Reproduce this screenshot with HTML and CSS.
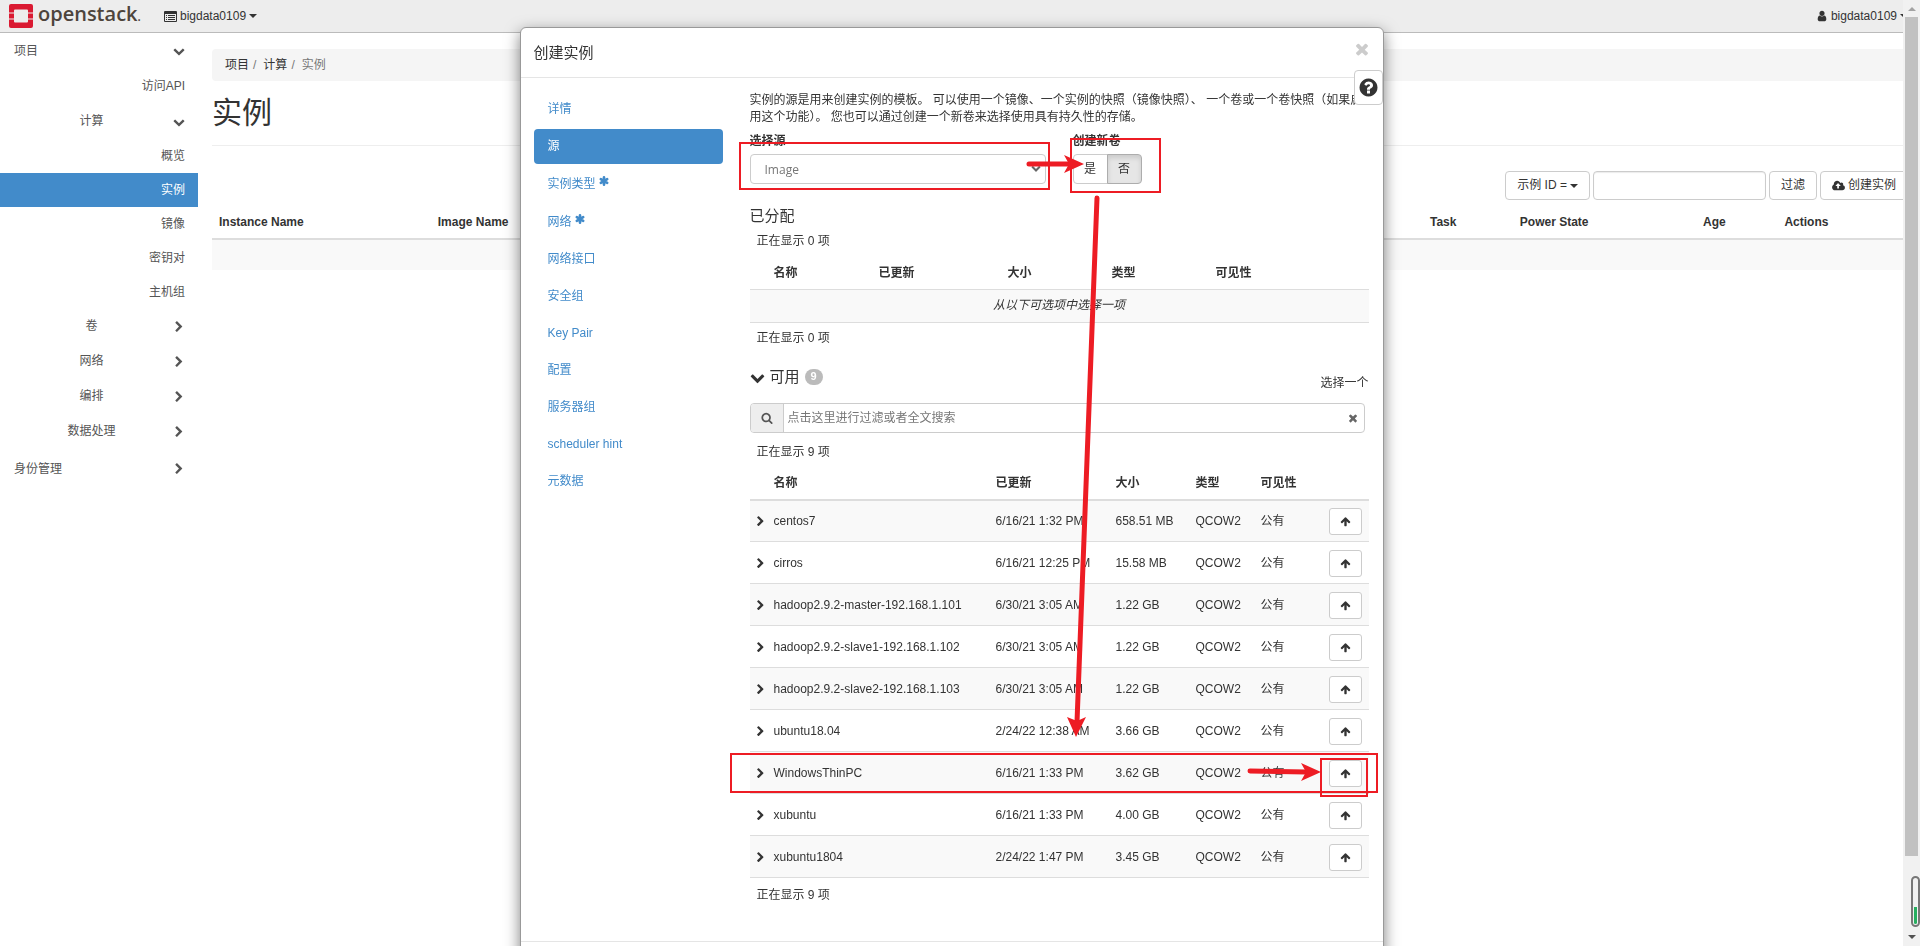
FILE: index.html
```html
<!DOCTYPE html>
<html lang="zh-CN">
<head>
<meta charset="utf-8">
<title>实例 - OpenStack Dashboard</title>
<link rel="stylesheet" href="styles.css">
</head>
<body>
<svg class="sprite" aria-hidden="true">
  <symbol id="down" viewBox="0 0 1792 1792"><path d="M1683 808l-742 741q-19 19-45 19t-45-19l-742-741q-19-19-19-45.500t19-45.500l166-165q19-19 45-19t45 19l531 531 531-531q19-19 45-19t45 19l166 165q19 19 19 45.500t-19 45.500z"/></symbol>
  <symbol id="right" viewBox="0 0 1792 1792"><path d="M1363 877l-742 742q-19 19-45 19t-45-19l-166-166q-19-19-19-45t19-45l531-531-531-531q-19-19-19-45t19-45l166-166q19-19 45-19t45 19l742 742q19 19 19 45t-19 45z"/></symbol>
  <symbol id="up" viewBox="0 0 1792 1792"><path d="M1675 971q0 51-37 90l-75 75q-38 38-91 38-54 0-90-38l-294-293v704q0 52-37.500 84.500t-90.500 32.500h-128q-53 0-90.500-32.500t-37.500-84.500v-704l-294 293q-36 38-90 38t-90-38l-75-75q-38-38-38-90 0-53 38-91l651-651q35-37 90-37 54 0 91 37l651 651q37 39 37 91z"/></symbol>
  <symbol id="times" viewBox="0 0 1792 1792"><path d="M1490 1322q0 40-28 68l-136 136q-28 28-68 28t-68-28l-294-294-294 294q-28 28-68 28t-68-28l-136-136q-28-28-28-68t28-68l294-294-294-294q-28-28-28-68t28-68l136-136q28-28 68-28t68 28l294 294 294-294q28-28 68-28t68 28l136 136q28 28 28 68t-28 68l-294 294 294 294q28 28 28 68z"/></symbol>
  <symbol id="question" viewBox="0 0 1792 1792"><path d="M1024 1376v-192q0-14-9-23t-23-9h-192q-14 0-23 9t-9 23v192q0 14 9 23t23 9h192q14 0 23-9t9-23zm256-672q0-88-55.500-163t-138.500-116-170-41q-243 0-371 213-15 24 8 42l132 100q7 6 19 6 16 0 25-12 53-68 86-92 34-24 86-24 48 0 85.500 26t37.500 59q0 38-20 61t-68 45q-63 28-115.500 86.500t-52.500 125.500v36q0 14 9 23t23 9h192q14 0 23-9t9-23q0-19 21.500-49.500t54.500-49.500q32-18 49-28.500t46-35 44.500-48 28-60.500 12.500-81zm384 192q0 209-103 385.500t-279.500 279.500-385.500 103-385.500-103-279.500-279.500-103-385.500 103-385.500 279.500-279.500 385.500-103 385.500 103 279.500 279.500 103 385.500z"/></symbol>
  <symbol id="search" viewBox="0 0 1792 1792"><path d="M1216 832q0-185-131.500-316.500t-316.500-131.500-316.500 131.500-131.500 316.500 131.500 316.500 316.500 131.500 316.500-131.500 131.500-316.500zm512 832q0 52-38 90t-90 38q-54 0-90-38l-343-342q-179 124-399 124-143 0-273.500-55.500t-225-150-150-225-55.500-273.500 55.500-273.500 150-225 225-150 273.500-55.500 273.500 55.500 225 150 150 225 55.500 273.500q0 220-124 399l343 343q37 37 37 90z"/></symbol>
  <symbol id="user" viewBox="0 0 1792 1792"><path d="M1536 1399q0 109-62.500 187t-150.500 78h-854q-88 0-150.500-78t-62.500-187q0-85 8.500-160.500t31.500-152 58.500-131 94-89 134.500-34.500q131 128 313 128t313-128q76 0 134.500 34.500t94 89 58.500 131 31.500 152 8.500 160.500zm-256-887q0 159-112.500 271.500t-271.500 112.500-271.500-112.500-112.500-271.500 112.500-271.500 271.500-112.500 271.500 112.500 112.500 271.500z"/></symbol>
  <symbol id="cloud" viewBox="0 0 1920 1792"><path d="M1280 864q0-14-9-23l-352-352q-9-9-23-9t-23 9l-351 351q-10 12-10 24 0 14 9 23t23 9h224v352q0 13 9.500 22.500t22.500 9.500h192q13 0 22.500-9.500t9.500-22.500v-352h224q13 0 22.500-9.500t9.500-22.500zm640 288q0 159-112.500 271.500t-271.500 112.500h-1088q-185 0-316.500-131.500t-131.500-316.500q0-130 70-240t188-165q-2-30-2-43 0-212 150-362t362-150q156 0 285.500 87t188.500 231q71-62 166-62 106 0 181 75t75 181q0 76-41 138 130 31 213.500 135.500t83.500 238.500z"/></symbol>
  <symbol id="list" viewBox="0 0 13 11"><path fill-rule="evenodd" d="M1 0h11a1 1 0 0 1 1 1v9a1 1 0 0 1-1 1H1a1 1 0 0 1-1-1V1a1 1 0 0 1 1-1zM1 3v7h11V3zM2 4h1v1H2zM4 4h7v1H4zM2 6h1v1H2zM4 6h7v1H4zM2 8h1v1H2zM4 8h7v1H4z"/></symbol>
  <symbol id="star" viewBox="0 0 10 10"><path d="M5 1.300v7.400M1.800 3.100l6.400 3.800M8.200 3.100l-6.400 3.800" fill="none" stroke="currentColor" stroke-width="2.600" stroke-linecap="round"/></symbol>
</svg>

<div class="page">
  <header class="topbar">
    <a class="brand" href="#">
      <svg class="logo" viewBox="0 0 24 24" aria-hidden="true"><path fill="#da1a32" d="M2 0h20a2 2 0 0 1 2 2v6.500h-5V6.500a1 1 0 0 0-1-1H6a1 1 0 0 0-1 1v2H0V2a2 2 0 0 1 2-2zM0 9.500h5v5H0zM19 9.500h5v5h-5zM0 15.500h5v2a1 1 0 0 0 1 1h12a1 1 0 0 0 1-1v-2h5V22a2 2 0 0 1-2 2H2a2 2 0 0 1-2-2z"/></svg>
      <span class="wordmark">openstack<small>.</small></span>
    </a>
    <button class="menu" type="button"><svg class="i-list"><use href="#list"/></svg>bigdata0109<span class="caret"></span></button>
    <button class="menu account" type="button"><svg class="i12"><use href="#user"/></svg>bigdata0109<span class="caret"></span></button>
  </header>
  <div class="columns">
    <nav class="sidebar" aria-label="导航">
      <a class="top" href="#">项目<svg class="i12"><use href="#down"/></svg></a>
      <a class="leaf wide" href="#">访问API</a>
      <a class="group" href="#"><span>计算</span><svg class="i12"><use href="#down"/></svg></a>
      <a class="leaf" href="#">概览</a>
      <a class="leaf active" href="#">实例</a>
      <a class="leaf" href="#">镜像</a>
      <a class="leaf" href="#">密钥对</a>
      <a class="leaf" href="#">主机组</a>
      <a class="group" href="#"><span>卷</span><svg class="i12"><use href="#right"/></svg></a>
      <a class="group" href="#"><span>网络</span><svg class="i12"><use href="#right"/></svg></a>
      <a class="group" href="#"><span>编排</span><svg class="i12"><use href="#right"/></svg></a>
      <a class="group" href="#"><span>数据处理</span><svg class="i12"><use href="#right"/></svg></a>
      <a class="top" href="#">身份管理<svg class="i12"><use href="#right"/></svg></a>
    </nav>
    <main class="main">
      <div class="crumbs"><a href="#">项目</a><i>/</i><a href="#">计算</a><i>/</i><span>实例</span></div>
      <h1>实例</h1>
      <div class="toolbar">
        <button class="btn" type="button">示例 ID =<span class="caret"></span></button>
        <input class="filter" type="text" aria-label="过滤">
        <button class="btn" type="button">过滤</button>
        <button class="btn" type="button"><svg class="i-cloud"><use href="#cloud"/></svg>创建实例</button>
      </div>
      <table class="instances">
        <colgroup><col class="c-inst"><col class="c-img"><col class="c-task"><col class="c-power"><col class="c-age"><col></colgroup>
        <thead><tr><th>Instance Name</th><th>Image Name</th><th>Task</th><th>Power State</th><th>Age</th><th>Actions</th></tr></thead>
        <tbody><tr><td colspan="6"></td></tr></tbody>
      </table>
    </main>
  </div>
</div>

<div class="backdrop">
  <section class="modal" role="dialog" aria-labelledby="dlg">
    <header class="modal-head">
      <h2 id="dlg">创建实例</h2>
      <button class="close" type="button" aria-label="关闭"><svg><use href="#times"/></svg></button>
    </header>
    <button class="help" type="button" aria-label="帮助"><svg><use href="#question"/></svg></button>
    <div class="modal-body">
      <nav class="steps" aria-label="步骤">
        <a href="#">详情</a>
        <a class="active" href="#">源</a>
        <a class="required" href="#">实例类型<svg><use href="#star"/></svg></a>
        <a class="required" href="#">网络<svg><use href="#star"/></svg></a>
        <a href="#">网络接口</a>
        <a href="#">安全组</a>
        <a href="#">Key Pair</a>
        <a href="#">配置</a>
        <a href="#">服务器组</a>
        <a href="#">scheduler hint</a>
        <a href="#">元数据</a>
      </nav>
      <div class="content">
        <p class="intro">实例的源是用来创建实例的模板。 可以使用一个镜像、一个实例的快照（镜像快照）、 一个卷或一个卷快照（如果启用这个功能）。 您也可以通过创建一个新卷来选择使用具有持久性的存储。</p>
        <div class="source">
          <div class="field">
            <label for="src">选择源</label>
            <div class="select"><select id="src"><option>Image</option></select><svg><use href="#down"/></svg></div>
          </div>
          <div class="field">
            <span class="label" id="vol">创建新卷</span>
            <div class="toggle" role="group" aria-labelledby="vol"><button type="button">是</button><button class="on" type="button" aria-pressed="true">否</button></div>
          </div>
        </div>

        <h3>已分配</h3>
        <p class="count">正在显示 0 项</p>
        <table class="allocated">
          <colgroup><col class="w24"><col class="w105"><col class="w129"><col class="w104"><col class="w104"><col></colgroup>
          <thead><tr><th></th><th>名称</th><th>已更新</th><th>大小</th><th>类型</th><th>可见性</th></tr></thead>
          <tbody><tr><td colspan="6"><em>从以下可选项中选择一项</em></td></tr></tbody>
        </table>
        <p class="count">正在显示 0 项</p>

        <div class="avail-head">
          <h3><svg><use href="#down"/></svg>可用<span class="badge">9</span></h3>
          <span>选择一个</span>
        </div>
        <div class="search">
          <span class="addon"><svg class="i12"><use href="#search"/></svg></span>
          <input type="text" aria-label="搜索" placeholder="点击这里进行过滤或者全文搜索">
          <button type="button" aria-label="清除"><svg class="i12"><use href="#times"/></svg></button>
        </div>
        <p class="count">正在显示 9 项</p>
        <table class="available">
          <colgroup><col class="w24"><col class="w222"><col class="w120"><col class="w80"><col class="w65"><col></colgroup>
          <thead><tr><th></th><th>名称</th><th>已更新</th><th>大小</th><th>类型</th><th>可见性</th></tr></thead>
          <tbody id="images"></tbody>
        </table>
        <p class="count">正在显示 9 项</p>
      </div>
    </div>
    <footer class="modal-foot"></footer>
    <svg class="marks" viewBox="0 0 864 920" aria-hidden="true">
      <g fill="none" stroke="#ed1c24" stroke-width="2">
        <path d="M220 115h309v46H220zM551 111h89v53h-89zM211 726h646v38H211zM801 731h46v37h-46z"/>
        <g stroke-width="5" stroke-linecap="round"><path d="M509 136h40M577 170l-20 524M730 743l56 1"/></g>
      </g>
      <g fill="#ed1c24"><path d="M544 127l20 9-20 9 5-9zM547 689l10 4 9-4-10 20zM781 735l20 9-20 9 5-9z"/></g>
    </svg>
  </section>
</div>

<div class="scrollbar" aria-hidden="true">
  <span class="arrow-up"></span>
  <span class="thumb"></span>
  <span class="arrow-down"></span>
  <span class="gauge"></span>
</div>
<script src="app.js"></script>
</body>
</html>
```
FILE: styles.css
```css
* { box-sizing: border-box; }
body {
  margin: 0;
  height: 100vh;
  overflow: hidden;
  background: #fff;
  color: #333;
  font: 12px/17px "Liberation Sans", "Noto Sans CJK SC", sans-serif;
}
a { color: inherit; text-decoration: none; }
button, input { font: inherit; color: inherit; }
button { padding: 0; border: 0; background: none; }
h1, h2, h3, p { margin: 0; font-weight: 400; }
svg { fill: currentColor; flex: none; }
table { width: 100%; border-collapse: collapse; table-layout: fixed; }
th { text-align: left; }
th, td { padding: 0; }
.sprite { display: none; }
.i12 { width: 12px; height: 12px; }
.i11 { width: 11px; height: 11px; }
.caret {
  display: inline-block;
  border: 4px solid transparent;
  border-top-color: currentColor;
  border-bottom: 0;
}

/* top bar */
.topbar {
  display: flex;
  align-items: center;
  height: 33px;
  padding: 0 12px 0 9px;
  background: #ededed;
  border-bottom: 1px solid #bbb;
}
.brand { display: flex; align-items: center; gap: 5px; width: 155px; color: #4d443c; }
.logo { width: 24px; height: 24px; }
.wordmark { font: 600 20px/28px "Open Sans", sans-serif; padding-bottom: 2px; }
.wordmark small { font-size: 12px; }
.menu { display: flex; align-items: center; gap: 3px; }
.account { margin-left: auto; }
.i-list { width: 13px; height: 11px; }

/* side navigation */
.columns { display: flex; }
.sidebar { width: 198px; flex: none; color: #555; }
.sidebar a { display: flex; align-items: center; height: 35px; padding: 0 13px; }
.sidebar .top { height: 36px; justify-content: space-between; padding: 0 13px 0 14px; }
.sidebar .top:last-child { margin-top: 2px; }
.sidebar .leaf { height: 34px; justify-content: flex-end; }
.sidebar .wide { height: 35px; }
.sidebar .group span { flex: 1; padding-right: 3px; text-align: center; }
.sidebar .active { background: #428bca; color: #fff; }

/* page content */
.main { flex: 1; min-width: 0; padding: 16px 12px 0 14px; }
.crumbs { height: 32px; padding: 0 13px; border-radius: 4px; background: #f5f5f5; line-height: 32px; }
.crumbs i { padding: 0 7px 0 4px; font-style: normal; color: #777; }
.crumbs span { color: #777; }
h1 { height: 65px; padding-top: 12px; border-bottom: 1px solid #eee; font-size: 30px; line-height: 40px; }
.toolbar { display: flex; justify-content: flex-end; gap: 3px; padding-top: 25px; }
.btn {
  display: flex;
  align-items: center;
  gap: 3px;
  height: 29px;
  padding: 0 11px;
  border: 1px solid #ccc;
  border-radius: 4px;
  background: #fff;
}
.i-cloud { width: 13px; height: 12px; }
.filter { width: 173px; height: 29px; border: 1px solid #ccc; border-radius: 4px; box-shadow: inset 0 1px 1px rgba(0, 0, 0, .08); }
.instances { margin-top: 5px; }
.instances th { height: 34px; padding: 2px 0 0 7px; border-bottom: 2px solid #ddd; }
.instances td { height: 31px; background: #f9f9f9; }
.c-inst { width: 12.900%; }
.c-img { width: 58.500%; }
.c-task { width: 5.300%; }
.c-power { width: 10.800%; }
.c-age { width: 4.800%; }

/* dialog */
.backdrop { position: fixed; inset: 0 17px 0 0; display: flex; justify-content: center; align-items: flex-start; padding-top: 27px; overflow: hidden; }
.modal {
  position: relative;
  width: 864px;
  max-width: 96%;
  flex: none;
  background: #fff;
  border: 1px solid #999;
  border-radius: 6px;
  box-shadow: 0 5px 15px rgba(0, 0, 0, .5);
}
.modal-head { display: flex; justify-content: space-between; height: 50px; padding: 15px 12px 0 13px; border-bottom: 1px solid #e5e5e5; }
.modal-head h2 { font-size: 15px; line-height: 20px; }
.close { height: 18px; margin-top: -3px; color: #ccc; }
.close svg { display: block; width: 18px; height: 18px; }
.help {
  position: absolute;
  top: 42px;
  right: 0;
  width: 29px;
  height: 35px;
  border: 1px solid #ccc;
  border-radius: 4px;
  background: #fff;
}
.help svg { display: block; width: 21px; height: 21px; margin: auto; }
.modal-body { display: flex; gap: 27px; padding: 14px 14px 0 13px; }
.steps { width: 189px; flex: none; color: #428bca; }
.steps a { display: flex; align-items: center; height: 35px; margin-bottom: 2px; padding: 0 14px; border-radius: 4px; }
.steps .active { background: #428bca; color: #fff; }
.steps .required { gap: 3px; height: 36px; }
.steps .required svg { width: 10px; height: 10px; margin-bottom: 7px; }
.content { flex: 1; min-width: 0; }
.source { display: flex; gap: 27px; padding-top: 7px; }
.field label, .label { display: block; height: 21px; font-weight: 700; }
.select { position: relative; width: 296px; }
.select select {
  width: 100%;
  height: 30px;
  padding: 0 14px;
  border: 1px solid #ccc;
  border-radius: 4px;
  background: #fff;
  color: #777;
  font: 12px/17px "Open Sans", sans-serif;
  appearance: none;
}
.select svg { position: absolute; top: 9px; right: 5px; width: 10px; height: 10px; color: #666; pointer-events: none; }
.toggle { display: flex; }
.toggle button { width: 35px; height: 30px; border: 1px solid #ccc; border-radius: 4px 0 0 4px; background: #fff; }
.toggle .on { margin-left: -1px; border-color: #adadad; border-radius: 0 4px 4px 0; background: #e6e6e6; box-shadow: inset 0 3px 5px rgba(0, 0, 0, .12); }
h3 { font-size: 15px; line-height: 20px; }
.source + h3 { margin-top: 22px; }
.count { height: 32px; padding: 7px; }
.allocated th { height: 31px; border-bottom: 1px solid #ddd; }
.allocated td { height: 33px; border-bottom: 1px solid #ddd; background: #f9f9f9; text-align: center; }
.avail-head { display: flex; justify-content: space-between; align-items: flex-end; height: 29px; margin: 8px 0 11px; }
.avail-head h3 { display: flex; align-items: center; gap: 5px; height: 29px; }
.avail-head h3 svg { width: 15px; height: 15px; }
.badge { width: 18px; height: 16px; border-radius: 8px; background: #bbb; color: #fff; font-size: 11px; font-weight: 700; line-height: 15px; text-align: center; }
.search { display: flex; align-items: center; height: 30px; margin: 0 4px 4px 0; border: 1px solid #ccc; border-radius: 4px; overflow: hidden; }
.addon { display: flex; align-items: center; justify-content: center; width: 33px; height: 100%; border-right: 1px solid #ccc; background: #eee; color: #555; }
.search input { flex: 1; min-width: 0; padding: 2px 4px 0; border: 0; outline: 0; }
.search input::placeholder { color: #777; }
.search button { width: 22px; height: 12px; color: #666; }
.search button svg { display: block; margin: auto; }
.available th { height: 31px; border-bottom: 2px solid #ddd; }
.available td { height: 42px; padding-top: 2px; border-bottom: 1px solid #ddd; }
.available tr:nth-child(odd) td { background: #f9f9f9; }
.available td:first-child { padding-left: 5px; }
.available td svg { display: block; }
.available + .count { padding-top: 9px; }
.vis { display: flex; align-items: center; justify-content: space-between; padding-right: 7px; }
.vis button { display: flex; align-items: center; justify-content: center; width: 33px; height: 27px; border: 1px solid #ccc; border-radius: 3px; background: #fff; }
.w24 { width: 24px; }
.w65 { width: 65px; }
.w80 { width: 80px; }
.w104 { width: 104px; }
.w105 { width: 105px; }
.w120 { width: 120px; }
.w129 { width: 129px; }
.w222 { width: 222px; }
.modal-foot { height: 60px; margin-top: 31px; border-top: 1px solid #e5e5e5; }
.marks { position: absolute; top: 0; left: -1px; width: 864px; height: 920px; pointer-events: none; }

/* window scrollbar */
.scrollbar {
  position: fixed;
  inset: 0 0 0 auto;
  display: flex;
  flex-direction: column;
  align-items: center;
  width: 17px;
  padding: 7px 0;
  background: #f1f1f1;
}
.arrow-up { border: 4px solid transparent; border-top: 0; border-bottom-color: #a3a3a3; }
.thumb { width: 13px; height: 90%; margin-top: 6px; background: #c1c1c1; }
.arrow-down { margin-top: auto; border: 4px solid transparent; border-bottom: 0; border-top-color: #505050; }
.gauge {
  position: absolute;
  right: 0;
  bottom: 19px;
  width: 9px;
  height: 51px;
  border: 2px solid #777;
  border-radius: 5px;
  background: linear-gradient(#f1f1f1 62%, #27ae60 62%) content-box;
  padding: 1px;
}
```
FILE: app.js
```js
const images = [
  ["centos7", "6/16/21 1:32 PM", "658.51 MB"],
  ["cirros", "6/16/21 12:25 PM", "15.58 MB"],
  ["hadoop2.9.2-master-192.168.1.101", "6/30/21 3:05 AM", "1.22 GB"],
  ["hadoop2.9.2-slave1-192.168.1.102", "6/30/21 3:05 AM", "1.22 GB"],
  ["hadoop2.9.2-slave2-192.168.1.103", "6/30/21 3:05 AM", "1.22 GB"],
  ["ubuntu18.04", "2/24/22 12:38 AM", "3.66 GB"],
  ["WindowsThinPC", "6/16/21 1:33 PM", "3.62 GB"],
  ["xubuntu", "6/16/21 1:33 PM", "4.00 GB"],
  ["xubuntu1804", "2/24/22 1:47 PM", "3.45 GB"],
];

document.getElementById("images").innerHTML = images.map(([name, updated, size]) => `
  <tr>
    <td><svg class="i11"><use href="#right"/></svg></td>
    <td>${name}</td><td>${updated}</td><td>${size}</td><td>QCOW2</td>
    <td><div class="vis">公有<button type="button" aria-label="分配 ${name}"><svg class="i11"><use href="#up"/></svg></button></div></td>
  </tr>`).join("");
```
